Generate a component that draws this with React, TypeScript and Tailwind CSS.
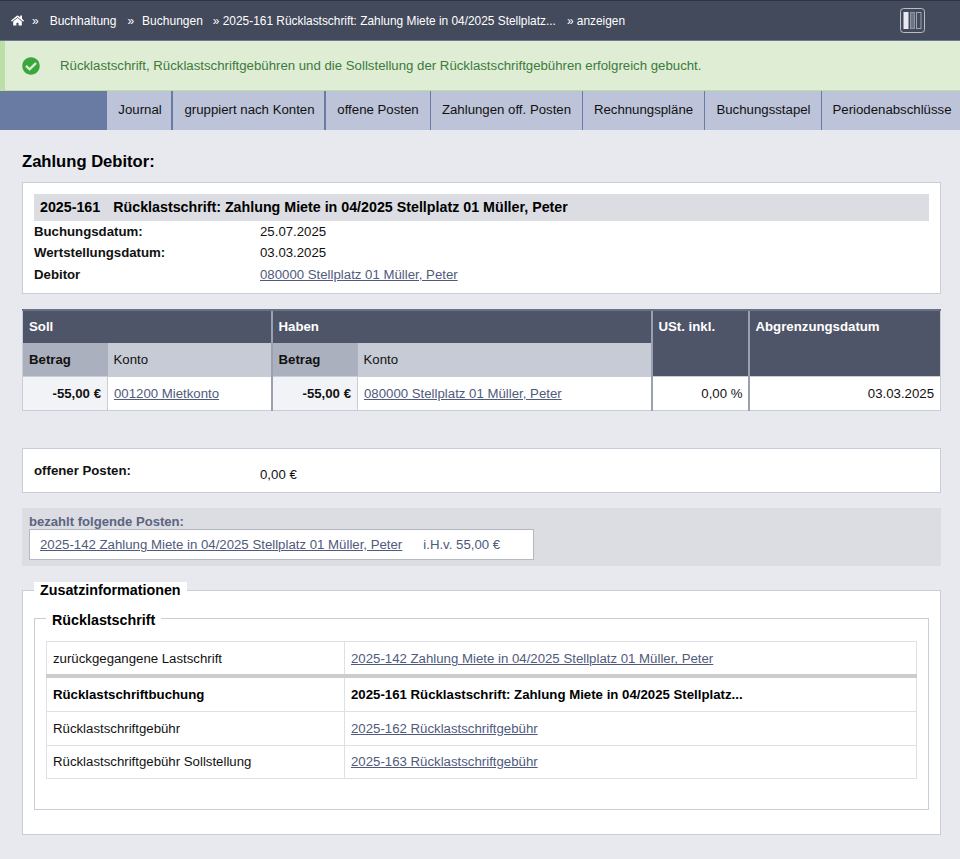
import { FaCheckCircle, FaHome } from "react-icons/fa";

const TABS = [
  { label: "Journal", w: "w-[66px]", border: "border-r-2 pl-[2px]" },
  { label: "gruppiert nach Konten", w: "w-[153px]", border: "border-r-2 pl-[2px]" },
  { label: "offene Posten", w: "w-[105px]", border: "border-r" },
  { label: "Zahlungen off. Posten", w: "w-[152px]", border: "border-r" },
  { label: "Rechnungspläne", w: "w-[122px]", border: "border-r" },
  { label: "Buchungsstapel", w: "w-[117px]", border: "border-r pl-[1px]" },
  { label: "Periodenabschlüsse", w: "flex-1", border: "pl-[2px]" },
];

const linkClass = "text-[#4f5a7c] underline";

function ColumnsIcon() {
  return (
    <svg width="25" height="25" viewBox="0 0 25 25" fill="none">
      <rect x="0.5" y="0.5" width="24" height="24" rx="3" stroke="#b9bdc8" strokeWidth="1" />
      <rect x="3.5" y="4" width="5" height="17" fill="#e9eaee" />
      <rect x="10.5" y="4.5" width="4" height="16" fill="#6e7484" stroke="#8f94a2" strokeWidth="1" />
      <rect x="16.5" y="4.5" width="4.5" height="16" stroke="#9ea3b0" strokeWidth="1" />
    </svg>
  );
}

function InfoRow({ label, children }: { label: string; children: React.ReactNode }) {
  return (
    <div className="flex h-[21.5px] items-center">
      <div className="w-[226px] font-bold">{label}</div>
      <div>{children}</div>
    </div>
  );
}

export default function App() {
  return (
    <div className="min-h-[859px] bg-[#e7e9ef] font-['Liberation_Sans',Arial,sans-serif] text-[13.22px] leading-[20px] text-[#111]">
      {/* Top bar */}
      <div className="flex h-[41px] items-center border-t border-b border-t-[#2f3442] border-b-[#68799f] bg-[#434a5c] pl-[11px] pr-[35px] text-[12px] text-white">
        <FaHome className="h-[13px] w-[13px]" />
        <span className="ml-[8px]">»</span>
        <span className="ml-[11px]">Buchhaltung</span>
        <span className="ml-[11px]">»</span>
        <span className="ml-[8px]">Buchungen</span>
        <span className="ml-[10px] text-[11.9px]">» 2025-161 Rücklastschrift: Zahlung Miete in 04/2025 Stellplatz...</span>
        <span className="ml-[11px] text-[11.9px]">» anzeigen</span>
        <div className="ml-auto flex">
          <ColumnsIcon />
        </div>
      </div>

      {/* Alert */}
      <div className="flex h-[50px] items-center border-b border-l-[5px] border-b-[#bcdfa8] border-l-[#bcdfa8] bg-[#deedd4] pl-[17px] text-[#3d7a3c]">
        <FaCheckCircle className="h-[18px] w-[18px] text-[#3aa63c]" />
        <span className="ml-[20px]">
          Rücklastschrift, Rücklastschriftgebühren und die Sollstellung der Rücklastschriftgebühren erfolgreich gebucht.
        </span>
      </div>

      {/* Tabs */}
      <div className="flex h-[39px] bg-[#6a7ba3]">
        <div className="w-[107px]" />
        {TABS.map((t) => (
          <div
            key={t.label}
            className={`flex items-center justify-center whitespace-nowrap border-[#6a7ba3] bg-[#bdc3d9] pb-[2px] text-[#111] ${t.w} ${t.border}`}
          >
            {t.label}
          </div>
        ))}
      </div>

      <div className="pl-[22px] pr-[19px]">
        <h1 className="mt-[22px] text-[16.6px] font-bold leading-[19px] text-black">Zahlung Debitor:</h1>

        {/* Booking card */}
        <div className="mt-[11px] h-[112px] border border-[#c8cdd8] bg-white px-[11px] pt-[11px]">
          <div className="flex h-[27px] items-center bg-[#dbdde3] px-[6px] pb-[2px] text-[14.25px] font-bold text-black">
            <span>2025-161</span>
            <span className="ml-[13px]">Rücklastschrift: Zahlung Miete in 04/2025 Stellplatz 01 Müller, Peter</span>
          </div>
          <div>
            <InfoRow label="Buchungsdatum:">25.07.2025</InfoRow>
            <InfoRow label="Wertstellungsdatum:">03.03.2025</InfoRow>
            <InfoRow label="Debitor">
              <a className={linkClass}>080000 Stellplatz 01 Müller, Peter</a>
            </InfoRow>
          </div>
        </div>

        {/* Amount table */}
        <table className="mt-[15px] w-[918px] table-fixed border-collapse border border-[#c8cdd8] bg-white">
          <colgroup>
            <col className="w-[85px]" />
            <col className="w-[164px]" />
            <col className="w-[86px]" />
            <col className="w-[294px]" />
            <col className="w-[97px]" />
            <col className="w-[192px]" />
          </colgroup>
          <thead>
            <tr className="h-[33px] bg-[#4f5568] text-left text-white">
              <th colSpan={2} className="border-t-[2px] border-t-[#6b7184] px-[6px] pb-[1px] align-middle">Soll</th>
              <th colSpan={2} className="border-l-[2px] border-t-[2px] border-l-[#9aa0b2] border-t-[#6b7184] px-[6px] pb-[1px]">Haben</th>
              <th rowSpan={2} className="border-l-[2px] border-t-[2px] border-l-[#9aa0b2] border-t-[#6b7184] px-[6px] pt-[6px] align-top">USt. inkl.</th>
              <th rowSpan={2} className="border-l-[2px] border-t-[2px] border-l-[#9aa0b2] border-t-[#6b7184] px-[6px] pt-[6px] align-top">Abgrenzungsdatum</th>
            </tr>
            <tr className="h-[33px] border-b border-b-[#c8cdd8] text-left text-[#111]">
              <th className="bg-[#abb0be] px-[6px] pt-[2px]">Betrag</th>
              <th className="bg-[#c7cbd5] px-[6px] pt-[2px] font-normal">Konto</th>
              <th className="border-l-[2px] border-l-[#9aa0b2] bg-[#abb0be] px-[6px] pt-[2px]">Betrag</th>
              <th className="bg-[#c7cbd5] px-[6px] pt-[2px] font-normal">Konto</th>
            </tr>
          </thead>
          <tbody>
            <tr className="h-[34px]">
              <td className="bg-[#f2f3f6] px-[6px] pt-[2px] text-right font-bold">-55,00 €</td>
              <td className="border-l border-l-[#c8cdd8] px-[6px] pt-[2px]"><a className={linkClass}>001200 Mietkonto</a></td>
              <td className="border-l-[2px] border-l-[#9aa0b2] bg-[#f2f3f6] px-[6px] pt-[2px] text-right font-bold">-55,00 €</td>
              <td className="border-l border-l-[#c8cdd8] px-[6px] pt-[2px]"><a className={linkClass}>080000 Stellplatz 01 Müller, Peter</a></td>
              <td className="border-l-[2px] border-l-[#9aa0b2] pl-[6px] pr-[5px] pt-[2px] text-right">0,00 %</td>
              <td className="border-l-[2px] border-l-[#9aa0b2] pl-[6px] pr-[6px] pt-[2px] text-right">03.03.2025</td>
            </tr>
          </tbody>
        </table>

        {/* Open item */}
        <div className="mt-[37px] flex h-[45px] items-center border border-[#c8cdd8] bg-white pl-[11px]">
          <div className="mt-[2px] w-[226px] font-bold">offener Posten:</div>
          <div className="mt-[9px]">0,00 €</div>
        </div>

        {/* Paid items */}
        <div className="mt-[15px] h-[58px] bg-[#dbdde3] px-[7px] pt-[6px]">
          <div className="text-[13.1px] font-bold leading-[15px] text-[#5b6480]">bezahlt folgende Posten:</div>
          <div className="flex h-[31px] w-[505px] items-center border border-[#b5b8c0] bg-white pl-[10px] pt-[2px]">
            <a className={linkClass}>2025-142 Zahlung Miete in 04/2025 Stellplatz 01 Müller, Peter</a>
            <span className="ml-[21px] text-[#4f5a7c]">i.H.v. 55,00 €</span>
          </div>
        </div>

        {/* Extra info */}
        <fieldset className="mt-[16px] h-[253px] border border-[#c8cdd8] bg-white px-[11px]">
          <legend className="bg-white px-[6px] pb-[2px] text-[14.3px] font-bold leading-[16px] text-black">Zusatzinformationen</legend>
          <fieldset className="mt-[10px] h-[200px] border border-[#c8cdd8] px-[11px]">
            <legend className="bg-white px-[6px] pt-[2px] text-[14.3px] font-bold leading-[16px] text-black">Rücklastschrift</legend>
            <table className="mt-[13px] w-[871px] table-fixed border-collapse border border-[#dfe0e3]">
              <colgroup>
                <col className="w-[298px]" />
                <col />
              </colgroup>
              <tbody>
                <tr className="h-[35px] border-b-[4px] border-b-[#cccccc]">
                  <td className="border-r border-r-[#dfe0e3] px-[6px] pt-[3px]">zurückgegangene Lastschrift</td>
                  <td className="px-[6px] pt-[3px]"><a className={linkClass}>2025-142 Zahlung Miete in 04/2025 Stellplatz 01 Müller, Peter</a></td>
                </tr>
                <tr className="h-[35px] border-b border-b-[#dfe0e3] font-bold text-black">
                  <td className="border-r border-r-[#dfe0e3] px-[6px] pt-[2px]">Rücklastschriftbuchung</td>
                  <td className="px-[6px] pt-[2px]">2025-161 Rücklastschrift: Zahlung Miete in 04/2025 Stellplatz...</td>
                </tr>
                <tr className="h-[34px] border-b border-b-[#dfe0e3]">
                  <td className="border-r border-r-[#dfe0e3] px-[6px] pt-[2px]">Rücklastschriftgebühr</td>
                  <td className="px-[6px] pt-[2px]"><a className={linkClass}>2025-162 Rücklastschriftgebühr</a></td>
                </tr>
                <tr className="h-[33px]">
                  <td className="border-r border-r-[#dfe0e3] px-[6px]">Rücklastschriftgebühr Sollstellung</td>
                  <td className="px-[6px]"><a className={linkClass}>2025-163 Rücklastschriftgebühr</a></td>
                </tr>
              </tbody>
            </table>
          </fieldset>
        </fieldset>
      </div>
    </div>
  );
}
